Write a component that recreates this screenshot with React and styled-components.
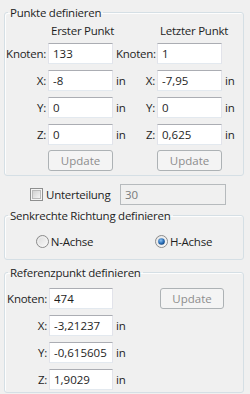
import React from "react";
import styled, { createGlobalStyle } from "styled-components";

const GlobalStyle = createGlobalStyle`
  html, body {
    margin: 0;
    padding: 0;
    background: #f0f0f0;
  }
  body {
    font-family: "Open Sans", "Noto Sans", "Liberation Sans", sans-serif;
    font-size: 11.5px;
    letter-spacing: -0.25px;
    color: #1e1e1e;
  }
`;

function RadioIcon({ checked }) {
  return (
    <svg width="13" height="13" viewBox="0 0 13 13">
      <defs>
        <linearGradient id="rbg" x1="0" y1="0" x2="1" y2="1">
          <stop offset="0" stopColor="#d9d9d9" />
          <stop offset="1" stopColor="#fbfbfb" />
        </linearGradient>
        <radialGradient id="rdot" cx="0.4" cy="0.35" r="0.7">
          <stop offset="0" stopColor="#8cc2f2" />
          <stop offset="0.6" stopColor="#2a6fb8" />
          <stop offset="1" stopColor="#0f3e75" />
        </radialGradient>
      </defs>
      <circle cx="6.5" cy="6.5" r="6" fill="url(#rbg)" stroke="#8b8b8b" strokeWidth="1" />
      <circle cx="6.5" cy="6.5" r="4.6" fill="none" stroke="#f4f4f4" strokeWidth="0.8" />
      {checked && <circle cx="6.5" cy="6.5" r="3.3" fill="url(#rdot)" />}
    </svg>
  );
}

function CheckIcon() {
  return (
    <svg width="13" height="13" viewBox="0 0 13 13">
      <defs>
        <linearGradient id="cbg" x1="0" y1="0" x2="1" y2="1">
          <stop offset="0" stopColor="#cfcfcf" />
          <stop offset="1" stopColor="#f6f6f6" />
        </linearGradient>
      </defs>
      <rect x="0.5" y="0.5" width="12" height="12" fill="#f4f4f4" stroke="#8e8f8f" />
      <rect x="2.5" y="2.5" width="8" height="8" fill="url(#cbg)" stroke="#b9b9b9" />
    </svg>
  );
}

function App() {
  const axes = ["X", "Y", "Z"];
  const first = ["-8", "0", "0"];
  const last = ["-7,95", "0", "0,625"];
  const ref = ["-3,21237", "-0,615605", "1,9029"];

  return (
    <Panel>
      <GlobalStyle />
      <Group>
        <Legend>Punkte definieren</Legend>
        <PointGrid>
          <span />
          <Header>Erster Punkt</Header>
          <span />
          <Header>Letzter Punkt</Header>
          <span />

          <Label>Knoten:</Label>
          <Field defaultValue="133" />
          <Middle>
            <span />
            <span>Knoten:</span>
          </Middle>
          <Field defaultValue="1" />
          <span />

          {axes.map((a, i) => (
            <React.Fragment key={a}>
              <Label>{a}:</Label>
              <Field defaultValue={first[i]} />
              <Middle>
                <span>in</span>
                <span>{a}:</span>
              </Middle>
              <Field defaultValue={last[i]} />
              <Unit>in</Unit>
            </React.Fragment>
          ))}

          <span />
          <UpdateButton disabled $lift>Update</UpdateButton>
          <span />
          <UpdateButton disabled $lift>Update</UpdateButton>
          <span />
        </PointGrid>
      </Group>

      <DivisionRow>
        <CheckLabel>
          <CheckIcon />
          <span>Unterteilung</span>
        </CheckLabel>
        <DisabledField disabled defaultValue="30" />
      </DivisionRow>

      <Group $gapTop={3}>
        <Legend>Senkrechte Richtung definieren</Legend>
        <RadioRow>
          <RadioOption>
            <RadioIcon />
            <span>N-Achse</span>
          </RadioOption>
          <RadioOption>
            <RadioIcon checked />
            <span>H-Achse</span>
          </RadioOption>
        </RadioRow>
      </Group>

      <Group $gapTop={5}>
        <Legend>Referenzpunkt definieren</Legend>
        <RefGrid>
          <Label>Knoten:</Label>
          <Field defaultValue="474" />
          <span />
          <UpdateButton disabled>Update</UpdateButton>
          {axes.map((a, i) => (
            <React.Fragment key={a}>
              <Label>{a}:</Label>
              <Field defaultValue={ref[i]} />
              <Unit>in</Unit>
              <span />
            </React.Fragment>
          ))}
        </RefGrid>
      </Group>
    </Panel>
  );
}

export default App;

const Panel = styled.div`
  width: 250px;
  height: 394px;
  overflow: hidden;
  padding-top: 5px;
  box-sizing: border-box;
  background: #f0f0f0;
`;

const Group = styled.fieldset`
  margin: ${(p) => p.$gapTop || 0}px 6px 0 4px;
  padding: 0;
  border: 1px solid #d5dfe5;
  border-radius: 3px;
  box-shadow: inset 1px 1px 0 #fdfdfd;
  min-width: 0;
`;

const Legend = styled.legend`
  margin-left: 3px;
  padding: 0 2px;
  line-height: 15px;
  color: #1e1e1e;
`;

const PointGrid = styled.div`
  display: grid;
  grid-template-columns: 43px 65px 44px 65px 1fr;
  grid-auto-rows: 21px;
  grid-template-rows: 13px;
  row-gap: 6px;
  align-items: center;
  padding: 4px 0 3px 0;
`;

const Header = styled.div`
  text-align: center;
  line-height: 13px;
  padding-left: 3px;
  white-space: nowrap;
`;

const Label = styled.div`
  text-align: right;
  padding-right: 2px;
  white-space: nowrap;
`;

const Middle = styled.div`
  display: flex;
  justify-content: space-between;
  padding: 0 2px 0 3px;
  white-space: nowrap;
`;

const Unit = styled.div`
  padding-left: 3px;
`;

const Field = styled.input`
  box-sizing: border-box;
  width: 100%;
  height: 21px;
  margin: 0;
  padding: 0 4px;
  font: inherit;
  color: #1e1e1e;
  background: #fff;
  border: 1px solid #e2e3ea;
  border-top-color: #abadb3;
  border-bottom-color: #e3e9ef;
  outline: none;
`;

const UpdateButton = styled.button`
  box-sizing: border-box;
  width: 100%;
  height: 21px;
  margin: ${(p) => (p.$lift ? "-2px 0 0 0" : "0")};
  padding: 0;
  font: inherit;
  color: #8d8d8d;
  background: #f4f4f4;
  border: 1px solid #adb2b5;
  border-radius: 3px;
`;

const DivisionRow = styled.div`
  display: flex;
  align-items: center;
  margin-top: 8px;
  padding-left: 30px;
  height: 21px;
`;

const CheckLabel = styled.label`
  display: flex;
  align-items: center;
  gap: 3px;
  width: 90px;
  svg {
    display: block;
  }
`;

const DisabledField = styled.input`
  box-sizing: border-box;
  width: 106px;
  height: 21px;
  margin: 0;
  padding: 0 4px;
  font: inherit;
  color: #7a7a7a;
  background: #f0f0f0;
  border: 1px solid #b6babd;
  outline: none;
`;

const RadioRow = styled.div`
  display: grid;
  grid-template-columns: 1fr 1fr;
  justify-items: center;
  padding: 11px 0 10px 0;
`;

const RadioOption = styled.label`
  display: flex;
  align-items: center;
  gap: 2px;
  line-height: 15px;
  svg {
    display: block;
  }
`;

const RefGrid = styled.div`
  display: grid;
  grid-template-columns: 44px 64px 47px 64px;
  grid-auto-rows: 21px;
  row-gap: 6px;
  align-items: center;
  padding: 8px 0 2px 0;
`;
